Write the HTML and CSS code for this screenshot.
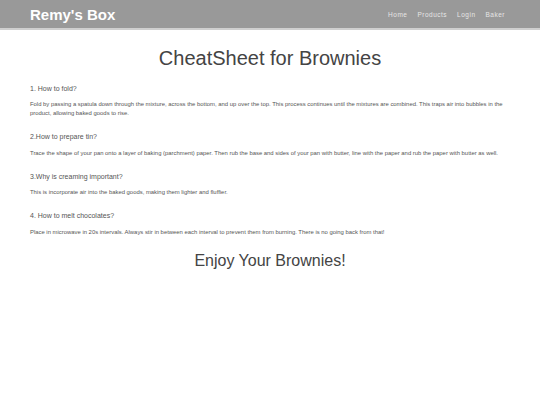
FILE: index.html
```html
<!DOCTYPE html>
<html>
<head>
<meta charset="utf-8">
<link rel="stylesheet" href="styles.css">
</head>
<body>
<header class="topbar">
  <div class="brand">Remy's Box</div>
  <nav class="nav">
    <a href="#">Home</a>
    <a href="#">Products</a>
    <a href="#">Login</a>
    <a href="#">Baker</a>
  </nav>
</header>
<main class="content">
  <h1 class="title">CheatSheet for Brownies</h1>
  <section class="tip">
    <h3 class="q">1. How to fold?</h3>
    <p class="a">Fold by passing a spatula down through the mixture, across the bottom, and up over the top. This process continues until the mixtures are combined. This traps air into bubbles in the product, allowing baked goods to rise.</p>
  </section>
  <section class="tip">
    <h3 class="q">2.How to prepare tin?</h3>
    <p class="a">Trace the shape of your pan onto a layer of baking (parchment) paper. Then rub the base and sides of your pan with butter, line with the paper and rub the paper with butter as well.</p>
  </section>
  <section class="tip">
    <h3 class="q">3.Why is creaming important?</h3>
    <p class="a">This is incorporate air into the baked goods, making them lighter and fluffier.</p>
  </section>
  <section class="tip">
    <h3 class="q">4. How to melt chocolates?</h3>
    <p class="a">Place in microwave in 20s intervals. Always stir in between each interval to prevent them from burning. There is no going back from that!</p>
  </section>
  <h2 class="enjoy">Enjoy Your Brownies!</h2>
</main>
</body>
</html>
```
FILE: styles.css
```css
html, body {
  margin: 0;
  padding: 0;
  background: #fff;
  font-family: "Liberation Sans", Arial, sans-serif;
}
.topbar {
  display: flex;
  align-items: center;
  justify-content: space-between;
  height: 28px;
  padding: 0 35px 0 30px;
  background: #999999;
  border-bottom: 2px solid #cfcfcf;
}
.brand {
  color: #fff;
  font-weight: bold;
  font-size: 15px;
}
.nav {
  display: flex;
  gap: 10px;
}
.nav a {
  color: #e6e6e6;
  text-decoration: none;
  font-size: 6.5px;
  letter-spacing: 0.5px;
}
.content {
  padding: 0 30px;
}
.title {
  margin: 16.5px 0 14px;
  text-align: center;
  font-weight: normal;
  font-size: 20px;
  line-height: 23px;
  color: #444;
}
.tip {
  margin-bottom: 14px;
}
.q {
  margin: 0 0 6.5px;
  font-weight: normal;
  font-size: 7px;
  line-height: 10px;
  color: #555;
}
.a {
  margin: 0;
  font-size: 5.9px;
  line-height: 9px;
  color: #555;
}
.enjoy {
  margin: 15px 0 0;
  text-align: center;
  font-weight: normal;
  font-size: 16px;
  line-height: 18px;
  color: #444;
}
```
